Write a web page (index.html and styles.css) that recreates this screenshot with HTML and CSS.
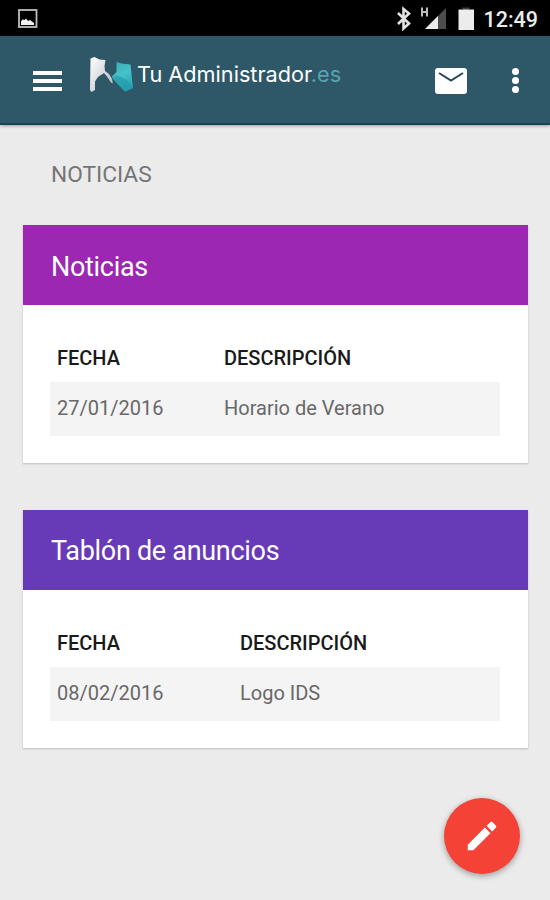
FILE: index.html
```html
<!DOCTYPE html>
<html lang="es">
  <head>
    <meta charset="UTF-8" />
    <meta name="viewport" content="width=device-width, initial-scale=1" />
    <title>Tu Administrador.es</title>
    <link rel="stylesheet" href="styles.css">
  </head>
  <body>
    <div class="status-bar">
      <svg class="status-photo" width="20" height="20" viewBox="0 0 20 20">
        <rect x="1" y="1" width="17.5" height="17" fill="none" stroke="#bdbdbd" stroke-width="1.800" />
        <path d="M3 16v-3.500l1.500-2 2 .5 1.500-1.500 2 2.500 2-1 2.500 2 1.500 1v2z" fill="#f2f2f2" />
      </svg>
      <div class="status-icons">
        <svg width="142" height="26" viewBox="0 0 142 26">
          <path d="M2 8l11 10.500-5.500 5V4L13 8.500 2 19" fill="none" stroke="#e4e4e4" stroke-width="2.600" />
          <path d="M26 2.500v9M31 2.500v9M26 7h5" fill="none" stroke="#bdbdbd" stroke-width="2" />
          <path d="M50 3v21H29z" fill="#4c4c4c" />
          <path d="M42 11v13H29z" fill="#ececec" />
          <path d="M67 3h6v1.500h5V25H62.500V4.500H67z" fill="#ececec" />
          <path d="M66 2.500h8v2h-8z" fill="#3c3c3c" />
        </svg>
        <span class="clock">12:49</span>
      </div>
    </div>

    <header class="toolbar">
      <a class="menu" href="#" aria-label="Menú">
        <span></span>
        <span></span>
        <span></span>
      </a>
      <a class="logo" href="#">
        <svg width="46" height="38" viewBox="0 0 46 38">
          <defs>
            <linearGradient id="gris" x1="0" y1="0" x2="1" y2="1">
              <stop offset="0" stop-color="#ffffff" />
              <stop offset="1" stop-color="#b4babe" />
            </linearGradient>
            <linearGradient id="turquesa" x1="0" y1="0" x2="0.300" y2="1">
              <stop offset="0" stop-color="#3fa9b3" />
              <stop offset="0.500" stop-color="#45c2ca" />
              <stop offset="1" stop-color="#2ba6b4" />
            </linearGradient>
          </defs>
          <path d="M2.500 2.500l4-1.500 5 2.500 6 .5-1 6 .5 5 4 3 3 5 .8 4.500-1.800-1-4-6-3-3.500-6 4L7 25.500v8.500L3.500 36 2 34z" fill="url(#gris)" />
          <path d="M28.500 6l5 1.500 9 1 2.500 23.500-8 3.500-5-5-8.500-9.500 5-5z" fill="url(#turquesa)" />
          <path d="M24 21l5.500-1.500 10 5 5.500 7.500-8 3.500-5-5z" fill="#1f97a8" opacity="0.600" />
        </svg>
        <span class="logo-text">Tu Administrador<span>.es</span></span>
      </a>
      <a class="mail" href="#" aria-label="Mensajes">
        <svg width="32" height="26" viewBox="0 0 32 26">
          <rect width="32" height="26" rx="3" fill="#fff" />
          <path d="M4 5l12 7.500L28 5" fill="none" stroke="#24465a" stroke-width="2" />
        </svg>
      </a>
      <a class="more" href="#" aria-label="Más">
        <span></span>
        <span></span>
        <span></span>
      </a>
    </header>

    <main>
      <h1>NOTICIAS</h1>

      <section class="card">
        <h2 class="noticias">Noticias</h2>
        <table>
          <thead>
            <tr>
              <th class="fecha">FECHA</th>
              <th>DESCRIPCIÓN</th>
            </tr>
          </thead>
          <tbody>
            <tr>
              <td>27/01/2016</td>
              <td>Horario de Verano</td>
            </tr>
          </tbody>
        </table>
      </section>

      <section class="card">
        <h2 class="anuncios">Tablón de anuncios</h2>
        <table>
          <thead>
            <tr>
              <th class="fecha-ancha">FECHA</th>
              <th>DESCRIPCIÓN</th>
            </tr>
          </thead>
          <tbody>
            <tr>
              <td>08/02/2016</td>
              <td>Logo IDS</td>
            </tr>
          </tbody>
        </table>
      </section>
    </main>

    <button class="fab" aria-label="Editar">
      <svg width="38" height="38" viewBox="0 0 24 24">
        <path d="M3 17.500V21h3.500L17.300 10.200l-3.500-3.500zM20.700 6.800c.4-.4.4-1 0-1.400l-2.100-2.100c-.4-.4-1-.4-1.400 0l-2.300 2.300 3.500 3.500z" fill="#fff" />
      </svg>
    </button>
  </body>
</html>
```
FILE: styles.css
```css
* {
  box-sizing: border-box;
}

body {
  margin: 0;
  min-height: 900px;
  background: #ebebeb;
  font-family: Roboto, Arial, sans-serif;
}

.status-bar {
  display: flex;
  justify-content: space-between;
  height: 36px;
  padding: 0 12px 0 18px;
  background: #000;
}

.status-photo {
  margin-top: 9px;
}

.status-icons {
  display: flex;
}

.status-icons svg {
  width: 142px;
  margin: 5px -55px 0 0;
}

.clock {
  color: #ececec;
  font-size: 21.5px;
  font-weight: 500;
  line-height: 40px;
}

.toolbar {
  display: flex;
  align-items: flex-start;
  height: 89px;
  padding: 0 31px 0 33px;
  background: #2e5768;
  border-bottom: 2px solid #164454;
  box-shadow: 0 1px 3px rgba(0, 0, 0, 0.35);
}

.menu {
  display: flex;
  flex-direction: column;
  gap: 4px;
  width: 29px;
  margin-top: 35px;
}

.menu span {
  height: 4px;
  background: #fff;
}

.logo {
  display: flex;
  margin: 20px auto 0 26px;
  text-decoration: none;
}

.logo-text {
  margin-left: 3px;
  color: #fff;
  font-family: Inter, sans-serif;
  font-size: 21.7px;
  line-height: 37px;
  white-space: nowrap;
}

.logo-text span {
  color: #55a5ad;
}

.mail {
  margin-top: 32px;
  height: 26px;
}

.more {
  display: flex;
  flex-direction: column;
  gap: 2px;
  margin: 32px 0 0 45px;
}

.more span {
  width: 7px;
  height: 7px;
  border-radius: 50%;
  background: #fff;
}

main {
  padding: 0 22px 0 23px;
}

h1 {
  margin: 0 0 0 28px;
  height: 100px;
  color: #757575;
  font-size: 22.7px;
  font-weight: 400;
  line-height: 100px;
}

.card {
  height: 238px;
  margin-bottom: 47px;
  background: #fff;
  box-shadow: 0 1px 2px rgba(0, 0, 0, 0.2);
}

h2 {
  margin: 0;
  height: 80px;
  padding-left: 28px;
  color: #fff;
  font-size: 27px;
  font-weight: 400;
  letter-spacing: -0.3px;
  line-height: 82px;
}

.noticias {
  background: #9c27b0;
  line-height: 84px;
}

.anuncios {
  background: #673ab7;
}

table {
  width: 450px;
  margin: 30px 0 0 27px;
  border-collapse: collapse;
  table-layout: fixed;
  font-size: 20px;
}

th,
td {
  padding: 0 0 0 7px;
  text-align: left;
}

th {
  height: 47px;
  padding-bottom: 1px;
  color: #1a1a1a;
  font-weight: 500;
}

td {
  height: 54px;
  padding-bottom: 3px;
  background: #f4f4f4;
  color: #686868;
}

.fecha {
  width: 167px;
}

.fecha-ancha {
  width: 183px;
}

.fab {
  position: fixed;
  right: 30px;
  bottom: 26px;
  display: flex;
  align-items: center;
  justify-content: center;
  width: 76px;
  height: 76px;
  padding: 0;
  border: none;
  border-radius: 50%;
  background: #f44336;
  box-shadow: 0 2px 6px rgba(0, 0, 0, 0.35);
  cursor: pointer;
}
```
